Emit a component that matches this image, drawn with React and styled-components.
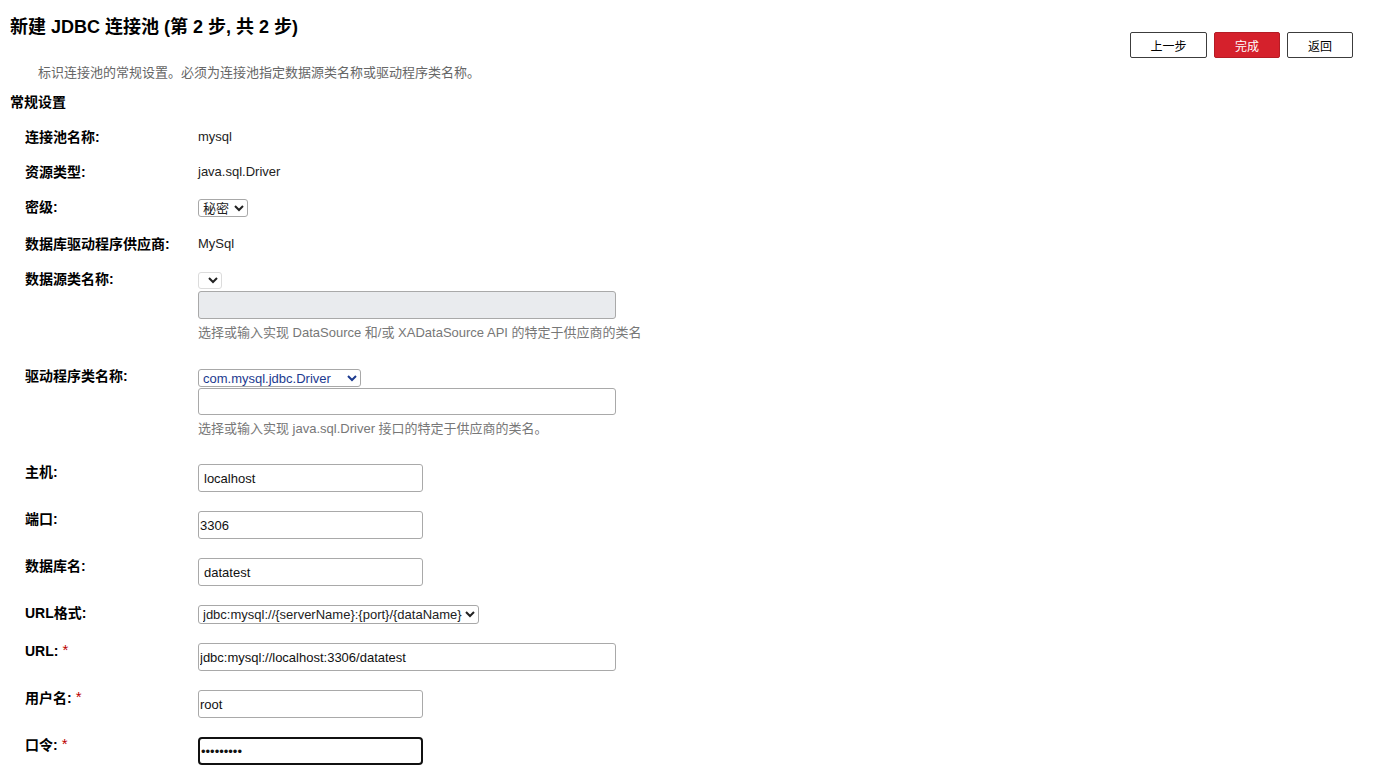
import React from 'react';
import styled, { createGlobalStyle } from 'styled-components';

const GlobalStyle = createGlobalStyle`
  body {
    margin: 0;
    background: #fff;
    font-family: "Liberation Sans", Arial, "Noto Sans CJK SC", sans-serif;
    color: #000;
  }
`;

const Page = styled.div`
  padding: 0 21px 0 10px;
`;

const Header = styled.div`
  display: flex;
  justify-content: space-between;
  align-items: flex-start;
`;

const Title = styled.h1`
  margin: 16px 0 0;
  font-size: 18px;
  line-height: 22px;
  font-weight: bold;
`;

const Actions = styled.div`
  display: flex;
  gap: 7px;
  margin-top: 32px;
`;

const Button = styled.button`
  height: 26px;
  width: ${p => p.$w || 66}px;
  padding: 0;
  font-family: inherit;
  font-size: 12px;
  border-radius: 2px;
  border: 1px solid ${p => (p.$primary ? '#b51c25' : '#3c3c3c')};
  background: ${p => (p.$primary ? '#d5212c' : '#fff')};
  color: ${p => (p.$primary ? '#fff' : '#000')};
  cursor: pointer;
`;

const Intro = styled.p`
  margin: 7px 0 0 28px;
  font-size: 13px;
  line-height: 16px;
  color: #666;
`;

const Section = styled.h2`
  margin: 12px 0 0;
  font-size: 14px;
  line-height: 18px;
  font-weight: bold;
`;

const Form = styled.div`
  display: flex;
  flex-direction: column;
  gap: 19px;
  margin-top: 18px;
  padding-left: 15px;
`;

const Row = styled.div`
  display: grid;
  grid-template-columns: 173px 1fr;
  align-items: start;
`;

const Label = styled.div`
  font-size: 14px;
  line-height: 16px;
  font-weight: bold;
  white-space: nowrap;
`;

const Required = styled.span`
  color: #b00;
  font-weight: normal;
  font-size: 15px;
  margin-left: 4px;
  position: relative;
  top: -1px;
`;

const Value = styled.div`
  display: flex;
  flex-direction: column;
  align-items: flex-start;
  font-size: 13px;
  line-height: 16px;
  color: #222;
`;

const Select = styled.select`
  width: ${p => p.$w}px;
  height: ${p => p.$h || 18}px;
  margin-top: ${p => p.$mt || 0}px;
  padding: 0;
  font-family: inherit;
  font-size: 13px;
  color: ${p => p.$color || '#222'};
  background: #fff;
  border: 1px solid ${p => (p.disabled ? '#dcdcdc' : '#a8a8a8')};
  border-radius: 3px;
  opacity: 1;
`;

const Input = styled.input`
  box-sizing: border-box;
  width: ${p => (p.$wide ? 418 : 225)}px;
  height: ${p => p.$h || 28}px;
  margin-top: ${p => p.$mt || 0}px;
  padding: 0 0 0 ${p => p.$indent || 1}px;
  font-family: inherit;
  font-size: 13px;
  color: #111;
  background: ${p => (p.disabled ? '#e9ebee' : '#fff')};
  border: ${p => (p.$focused ? '2px solid #111' : '1px solid #a9a9a9')};
  border-radius: ${p => (p.$focused ? 4 : 3)}px;
  outline: none;
`;

const Hint = styled.div`
  margin: 6px 0 8px;
  font-size: 13px;
  line-height: 16px;
  color: #777;
  white-space: nowrap;
`;

export default function App() {
  return (
    <Page>
      <GlobalStyle />
      <Header>
        <Title>新建 JDBC 连接池 (第 2 步, 共 2 步)</Title>
        <Actions>
          <Button $w={77}>上一步</Button>
          <Button $primary>完成</Button>
          <Button>返回</Button>
        </Actions>
      </Header>
      <Intro>标识连接池的常规设置。必须为连接池指定数据源类名称或驱动程序类名称。</Intro>
      <Section>常规设置</Section>
      <Form>
        <Row>
          <Label>连接池名称:</Label>
          <Value>mysql</Value>
        </Row>
        <Row>
          <Label>资源类型:</Label>
          <Value>java.sql.Driver</Value>
        </Row>
        <Row>
          <Label>密级:</Label>
          <Value>
            <Select $w={50} defaultValue="秘密">
              <option>秘密</option>
            </Select>
          </Value>
        </Row>
        <Row>
          <Label>数据库驱动程序供应商:</Label>
          <Value>MySql</Value>
        </Row>
        <Row>
          <Label>数据源类名称:</Label>
          <Value>
            <Select $w={24} $h={17} $mt={1} disabled>
              <option></option>
            </Select>
            <Input $wide $mt={2} disabled />
            <Hint>选择或输入实现 DataSource 和/或 XADataSource API 的特定于供应商的类名</Hint>
          </Value>
        </Row>
        <Row>
          <Label>驱动程序类名称:</Label>
          <Value>
            <Select $w={163} $mt={1} $color="#1c3a8f" defaultValue="com.mysql.jdbc.Driver">
              <option>com.mysql.jdbc.Driver</option>
            </Select>
            <Input $wide $h={27} $mt={1} />
            <Hint>选择或输入实现 java.sql.Driver 接口的特定于供应商的类名。</Hint>
          </Value>
        </Row>
        <Row>
          <Label>主机:</Label>
          <Value>
            <Input defaultValue="localhost" $indent={5} />
          </Value>
        </Row>
        <Row>
          <Label>端口:</Label>
          <Value>
            <Input defaultValue="3306" />
          </Value>
        </Row>
        <Row>
          <Label>数据库名:</Label>
          <Value>
            <Input defaultValue="datatest" $indent={5} />
          </Value>
        </Row>
        <Row>
          <Label>URL格式:</Label>
          <Value>
            <Select $w={281} $h={19} defaultValue="f">
              <option value="f">jdbc:mysql://{'{serverName}'}:{'{port}'}/{'{dataName}'}</option>
            </Select>
          </Value>
        </Row>
        <Row>
          <Label>
            URL:<Required>*</Required>
          </Label>
          <Value>
            <Input $wide defaultValue="jdbc:mysql://localhost:3306/datatest" />
          </Value>
        </Row>
        <Row>
          <Label>
            用户名:<Required>*</Required>
          </Label>
          <Value>
            <Input defaultValue="root" />
          </Value>
        </Row>
        <Row>
          <Label>
            口令:<Required>*</Required>
          </Label>
          <Value>
            <Input type="password" defaultValue="123456789" $focused />
          </Value>
        </Row>
      </Form>
    </Page>
  );
}
